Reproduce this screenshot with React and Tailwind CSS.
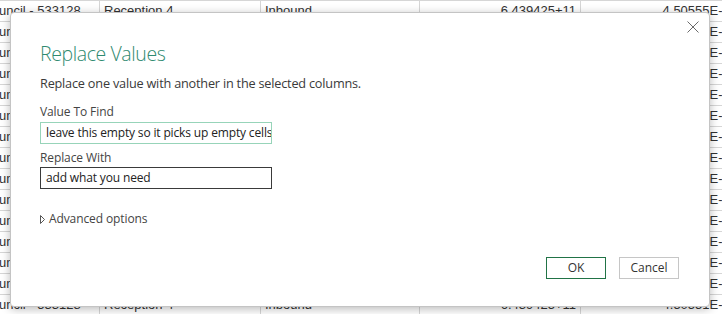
import React from "react";

const rows = Array.from({ length: 15 }, (_, i) => ({
  a: "uncil - 533128",
  b: "Reception 4",
  c: "Inbound",
  d: "6.439425+11",
  e: i < 5 ? "4.50555E-05" : "4.50551E-05",
}));

export default function App() {
  return (
    <div className="relative w-[722px] h-[314px] overflow-hidden bg-white">
      {/* spreadsheet background */}
      <div className="flex flex-col font-['Liberation_Sans',sans-serif] text-[13px] text-[#333]">
        <div className="h-px bg-[#d6d6d6] w-[760px]" />
        {rows.map((r, i) => (
          <div key={i} className="flex h-[21px] border-b border-[#d6d6d6] w-[760px] items-center">
            <div className="w-[101px] h-full border-r border-[#d6d6d6] flex items-center -ml-px whitespace-nowrap overflow-hidden">{r.a}</div>
            <div className="w-[161px] h-full border-r border-[#d6d6d6] flex items-center pl-1 whitespace-nowrap">{r.b}</div>
            <div className="w-[159px] h-full border-r border-[#d6d6d6] flex items-center pl-1 whitespace-nowrap">{r.c}</div>
            <div className="w-[161px] h-full border-r border-[#d6d6d6] flex items-center justify-end pr-1 whitespace-nowrap">{r.d}</div>
            <div className="w-[160px] h-full flex items-center justify-end pr-1 whitespace-nowrap">{r.e}</div>
          </div>
        ))}
      </div>

      {/* dialog */}
      <div className="absolute left-[10px] top-[12px] w-[700px] h-[295px] bg-white rounded-[4px] border border-[#c4c4c4] shadow-[0_2px_10px_rgba(0,0,0,0.28)] font-['Open_Sans',sans-serif] text-[#444]">
        <button className="absolute right-[10px] top-[7px] w-[13px] h-[13px] flex items-center justify-center">
          <svg width="12" height="12" viewBox="0 0 12 12">
            <path d="M0.5 0.5 L11.5 11.5 M11.5 0.5 L0.5 11.5" stroke="#6a6a6a" strokeWidth="1" fill="none" />
          </svg>
        </button>
        <div className="flex flex-col pl-[29px] pt-[28px]">
          <div className="text-[19.5px] leading-[26px] font-light text-[#2f8a70] tracking-[-0.4px]">Replace Values</div>
          <div className="mt-[7px] text-[12.7px] leading-[18px] text-[#3a3a3a] tracking-[-0.2px]">
            Replace one value with another in the selected columns.
          </div>
          <div className="mt-[12px] text-[12px] leading-[16px] text-[#444] tracking-[-0.1px]">Value To Find</div>
          <div className="mt-[2px] w-[232px] h-[22px] border border-[#97d4b9] flex items-center pl-[5px] text-[12px] text-[#222] tracking-[-0.15px] whitespace-nowrap overflow-hidden">
            <span>leave this empty so it picks up empty cells</span>
            <span className="inline-block w-px h-[16px] bg-black" />
          </div>
          <div className="mt-[6px] text-[12px] leading-[16px] text-[#444] tracking-[-0.1px]">Replace With</div>
          <div className="mt-[1px] w-[232px] h-[22px] border border-[#3a3a3a] flex items-center pl-[5px] text-[12px] text-[#222] tracking-[-0.15px] whitespace-nowrap">
            add what you need
          </div>
          <div className="mt-[21px] flex items-center gap-[4px] text-[12px] text-[#444] tracking-[-0.1px]">
            <svg width="5" height="9" viewBox="0 0 5 9">
              <path d="M0.5 0.5 L4.5 4.5 L0.5 8.5 Z" stroke="#555" strokeWidth="1" fill="none" />
            </svg>
            <span>Advanced options</span>
          </div>
        </div>
        <div className="absolute right-[30px] bottom-[27px] flex gap-[13px]">
          <button className="w-[60px] h-[22px] border border-[#217346] text-[12px] text-[#333] flex items-center justify-center">OK</button>
          <button className="w-[60px] h-[22px] border border-[#c6c6c6] text-[12px] text-[#333] flex items-center justify-center">Cancel</button>
        </div>
      </div>
    </div>
  );
}
